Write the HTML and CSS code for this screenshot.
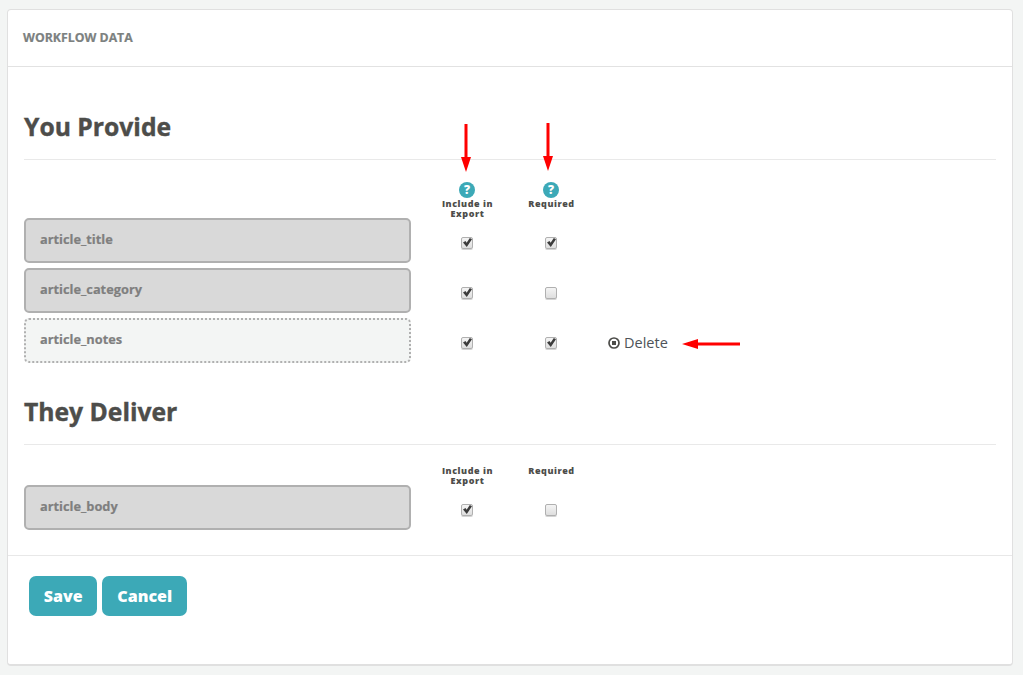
FILE: index.html
```html
<!DOCTYPE html>
<html lang="en">
<head>
<meta charset="utf-8">
<title>Workflow Data</title>
<link rel="stylesheet" href="styles.css">
</head>
<body>
<main class="card">
  <header class="card-head">WORKFLOW DATA</header>
  <div class="card-body">
    <section class="provide">
      <h2 class="title">You Provide</h2>
      <div class="labels labels-help">
        <div class="label">
          <span class="help">?</span>
          <span class="label-text">Include in Export</span>
        </div>
        <div class="label">
          <span class="help">?</span>
          <span class="label-text">Required</span>
        </div>
      </div>
      <div class="rows">
        <div class="row">
          <div class="field">article_title</div>
          <div class="cell"><input class="check" type="checkbox" checked></div>
          <div class="cell"><input class="check" type="checkbox" checked></div>
        </div>
        <div class="row">
          <div class="field">article_category</div>
          <div class="cell"><input class="check" type="checkbox" checked></div>
          <div class="cell"><input class="check" type="checkbox"></div>
        </div>
        <div class="row">
          <div class="field field-new">article_notes</div>
          <div class="cell"><input class="check" type="checkbox" checked></div>
          <div class="cell"><input class="check" type="checkbox" checked></div>
          <a class="delete">
            <svg class="delete-icon" viewBox="0 0 12 12" width="12" height="12"><circle cx="6" cy="6" r="5" fill="none" stroke="#4d4d4a" stroke-width="1.7"/><rect x="4" y="4" width="4" height="4" fill="#4d4d4a"/></svg>
            Delete
          </a>
        </div>
      </div>
    </section>
    <section class="deliver">
      <h2 class="title">They Deliver</h2>
      <div class="labels">
        <div class="label"><span class="label-text">Include in Export</span></div>
        <div class="label"><span class="label-text">Required</span></div>
      </div>
      <div class="rows">
        <div class="row">
          <div class="field">article_body</div>
          <div class="cell"><input class="check" type="checkbox" checked></div>
          <div class="cell"><input class="check" type="checkbox"></div>
        </div>
      </div>
    </section>
  </div>
  <footer class="card-foot">
    <button class="btn" type="button">Save</button>
    <button class="btn btn-wide" type="button">Cancel</button>
  </footer>
</main>
<svg class="arrow arrow-include" width="12" height="52" viewBox="0 0 12 52"><path d="M4.5 1h3v33h3.500l-5 15-5-15h3.500z" fill="#f00"/></svg>
<svg class="arrow arrow-required" width="12" height="52" viewBox="0 0 12 52"><path d="M4.500 1h3v33h3.500l-5 15-5-15h3.500z" fill="#f00"/></svg>
<svg class="arrow arrow-delete" width="60" height="12" viewBox="0 0 60 12"><path d="M59 4.500v3H17v3.500L1 6l16-5v3.500z" fill="#f00"/></svg>
</body>
</html>
```
FILE: styles.css
```css
* { box-sizing: border-box; }
html, body { margin: 0; height: 100%; }
body {
  position: relative;
  background: #f3f5f4;
  font-family: "Open Sans", sans-serif;
  color: #4d4d4a;
  padding: 9px 10px 9px 7px;
  overflow: hidden;
}
.card {
  height: 657px;
  background: #fff;
  border: 1px solid #e0e0e0;
  border-bottom-width: 2px;
  border-radius: 4px;
}
.card-head {
  height: 57px;
  padding: 21px 0 0 15px;
  font-size: 12.3px;
  line-height: 14px;
  font-weight: 700;
  color: #7c8180;
  -webkit-text-stroke: 0.2px #7c8180;
  border-bottom: 1px solid #e2e2e2;
}
.card-body {
  height: 489px;
  padding: 0 16px;
  border-bottom: 1px solid #e8e8e8;
}
.title {
  margin: 0;
  font-size: 24.7px;
  line-height: 32px;
  font-weight: 700;
  color: #4d4d4a;
  -webkit-text-stroke: 0.4px #4d4d4a;
  border-bottom: 1px solid #e9e9e9;
}
.provide .title { padding: 44px 0 16px; }
.deliver { padding-top: 33px; }
.deliver .title { padding: 0 0 16px; }
.labels {
  display: flex;
  padding-left: 401px;
  height: 58px;
  padding-top: 21px;
}
.labels-help { padding-top: 22px; }
.deliver .labels { height: 40px; padding-top: 21px; }
.label {
  width: 84px;
  padding: 0 15px;
  display: flex;
  flex-direction: column;
  align-items: center;
  text-align: center;
  font-size: 9px;
  letter-spacing: 0.55px;
  line-height: 10px;
  font-weight: 800;
}
.label-text { padding-left: 1px; }
.help {
  width: 16px;
  height: 16px;
  border-radius: 50%;
  background: #3ca9b7;
  color: #fff;
  font-size: 12px;
  line-height: 16px;
  font-weight: 800;
  letter-spacing: 0;
  margin-bottom: 1px;
}
.rows { display: flex; flex-direction: column; gap: 5px; }
.row { display: flex; align-items: center; height: 45px; }
.field {
  width: 387px;
  height: 45px;
  padding: 11px 14px;
  margin-right: 14px;
  background: #d9d9d9;
  border: 2px solid #b0b0b0;
  border-radius: 5px;
  font-size: 12.8px;
  line-height: 16px;
  font-weight: 700;
  color: #7f7f7f;
  -webkit-text-stroke: 0.2px #7f7f7f;
}
.field-new {
  background: #f3f5f4;
  border: 2px dotted #b0b0b0;
}
.cell { width: 84px; display: flex; justify-content: center; padding-top: 5px; }
.check {
  appearance: none;
  position: relative;
  width: 12px;
  height: 12px;
  margin: 0;
  border: 1px solid #b0b0b0;
  border-radius: 2px;
  background: linear-gradient(#f4f4f4, #dedede);
  box-shadow: 0 1px 0 #d4d4d4;
}
.check:checked::after {
  content: "";
  position: absolute;
  left: 1px;
  top: 0;
  width: 9px;
  height: 9px;
  background: #3c3c3c;
  clip-path: polygon(0 50%, 28% 32%, 40% 52%, 76% 0, 100% 14%, 42% 100%);
}
.delete {
  display: flex;
  align-items: center;
  gap: 4px;
  margin-left: 15px;
  padding-top: 5px;
  font-size: 14.5px;
  line-height: 18px;
  color: #4e5358;
}
.card-foot { display: flex; gap: 4.8px; padding: 20px 0 0 21px; }
.btn {
  height: 40px;
  padding: 0 14.7px;
  background: #3ca9b7;
  border: 0;
  border-radius: 7px;
  color: #fff;
  font-family: inherit;
  font-size: 16px;
  font-weight: 800;
  line-height: 38px;
}
.btn-wide { padding: 0 15.3px; }
.arrow { position: absolute; }
.arrow-include { left: 460px; top: 123px; }
.arrow-required { left: 542px; top: 122px; }
.arrow-delete { left: 681px; top: 338px; }
```
